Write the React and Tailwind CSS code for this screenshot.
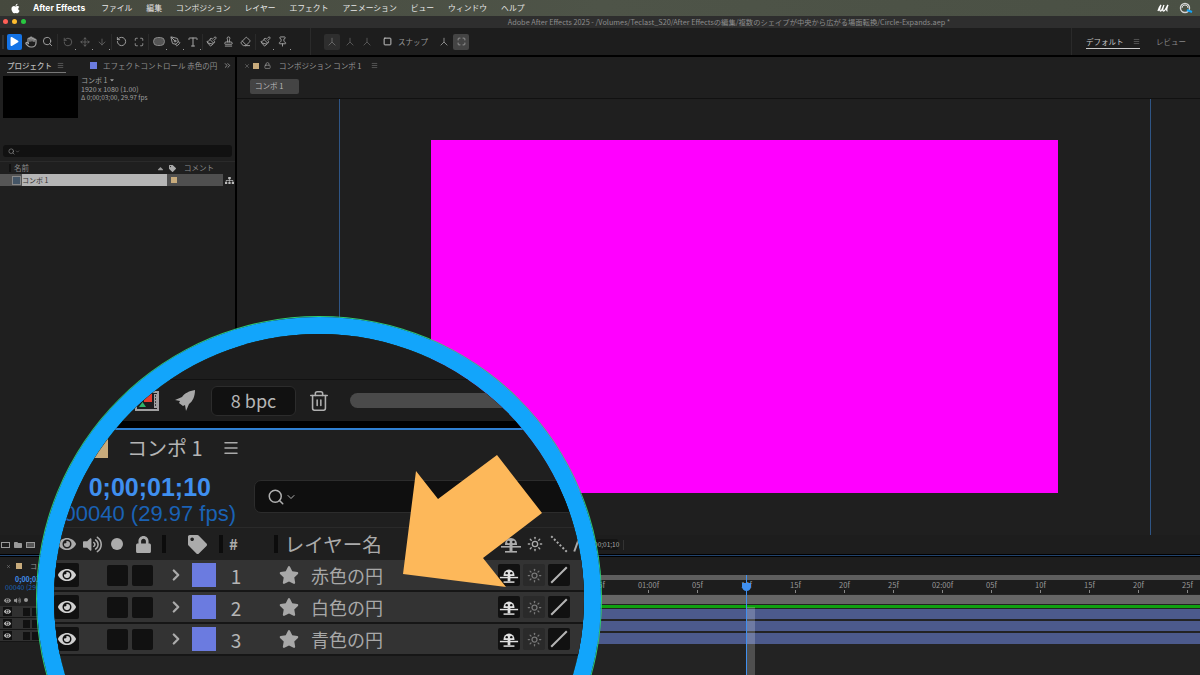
import React from "react";
import { FaApple, FaEye, FaLock, FaStar, FaTag, FaVolumeUp, FaSitemap, FaFolder, FaCaretDown, FaCaretUp, FaPlay } from "react-icons/fa";
import { Hand, Search, Move, ArrowDown, RotateCcw, PenTool, Type, Paintbrush, Stamp, Eraser, Pin, Menu, ChevronRight, ChevronDown, Trash2, Sun, Maximize, Square, ChevronsRight, Lock, X } from "lucide-react";

const menus = ["ファイル", "編集", "コンポジション", "レイヤー", "エフェクト", "アニメーション", "ビュー", "ウィンドウ", "ヘルプ"];
const ticks = ["15f", "01:00f", "05f", "10f", "15f", "20f", "25f", "02:00f", "05f", "10f", "15f", "20f", "25f"];
const layers = [
  { n: 1, name: "赤色の円" },
  { n: 2, name: "白色の円" },
  { n: 3, name: "青色の円" },
];

function Shy({ size = 22, className = "" }) {
  return (
    <svg width={size} height={size} viewBox="0 0 22 22" className={className} fill="currentColor">
      <path d="M5 11a6 6 0 0 1 12 0v1H5z" />
      <rect x="1" y="13" width="20" height="1.6" />
      <rect x="9.5" y="12" width="3" height="6" />
      <rect x="5" y="18" width="12" height="1.6" />
      <circle cx="8.5" cy="9" r="1.3" fill="#111" />
      <circle cx="13.5" cy="9" r="1.3" fill="#111" />
    </svg>
  );
}

function Tripod({ size = 12, className = "" }) {
  return (
    <svg width={size} height={size} viewBox="0 0 12 12" className={className} stroke="currentColor" fill="none" strokeWidth="1.2">
      <path d="M6 1v5L2 10M6 6l4 4" />
    </svg>
  );
}

function Rocket() {
  return (
    <svg width="24" height="24" viewBox="0 0 24 24" fill="#a8a8a8">
      <path d="M22 1c-6 1-10 3-13 7l-7 3 5 1-1 2 4 3 2-1 1 6 3-7c4-3 6-8 6-14z" />
    </svg>
  );
}

function Film() {
  return (
    <svg width="24" height="20" viewBox="0 0 24 20">
      <rect x="1" y="1" width="22" height="18" fill="#1d1d1d" stroke="#a0a0a0" strokeWidth="2" />
      <rect x="19" y="3" width="3" height="14" fill="#a0a0a0" />
      <path d="M20 5h1M20 8h1M20 11h1M20 14h1" stroke="#1d1d1d" strokeWidth="1.4" />
      <rect x="9" y="3" width="8" height="8" fill="#e53b2c" />
      <path d="M4 16l3.500-5 3.500 5z" fill="#2fb56a" />
    </svg>
  );
}

function Tool({ children, dot }) {
  return (
    <div className="relative flex h-[16px] w-[17px] items-center justify-center text-[#a6a6a6]">
      {children}
      {dot && <span className="absolute bottom-0 right-0 h-[1px] w-[1px] bg-[#999]" />}
    </div>
  );
}

function Toolbar() {
  return (
    <div className="flex h-[27px] items-center bg-[#1d1d1d] pl-[2px]">
      <div className="mr-[3px] h-[14px] w-[2px] bg-[#333]" />
      <div className="flex h-[16px] w-[15px] items-center justify-center rounded-[2px] bg-[#1473e6]">
        <FaPlay size={9} color="#fff" />
      </div>
      <div className="flex">
        <Tool><Hand size={12} strokeWidth={2.4} /></Tool>
        <Tool><Search size={11} /></Tool>
      </div>
      <div className="mx-[1px] h-[16px] w-[1px] bg-[#2a2a2a]" />
      <div className="flex text-[#666]">
        <Tool dot><RotateCcw size={10} className="text-[#666]" /></Tool>
        <Tool dot><Move size={10} className="text-[#666]" /></Tool>
        <Tool dot><ArrowDown size={10} className="text-[#666]" /></Tool>
      </div>
      <div className="mx-[1px] h-[16px] w-[1px] bg-[#2a2a2a]" />
      <Tool><RotateCcw size={11} /></Tool>
      <Tool><Maximize size={10} /></Tool>
      <div className="mx-[1px] h-[16px] w-[1px] bg-[#2a2a2a]" />
      <div className="flex">
        <Tool dot><span className="h-[9px] w-[12px] rounded-full border border-[#888] bg-[#555]" /></Tool>
        <Tool dot><PenTool size={11} /></Tool>
        <Tool dot><Type size={12} /></Tool>
      </div>
      <div className="ml-[1px] h-[16px] w-[1px] bg-[#2a2a2a]" />
      <div className="flex">
        <Tool><Paintbrush size={11} /></Tool>
        <Tool><Stamp size={11} /></Tool>
        <Tool><Eraser size={11} /></Tool>
      </div>
      <div className="mx-[1px] h-[16px] w-[1px] bg-[#2a2a2a]" />
      <Tool dot><Paintbrush size={11} /></Tool>
      <Tool dot><Pin size={11} /></Tool>
      <div className="ml-[19px] h-[27px] w-[1px] bg-[#2a2a2a]" />
      <div className="ml-[13px] flex h-[16px] w-[16px] items-center justify-center rounded-[2px] bg-[#2e2e2e] text-[#666]">
        <Tripod size={10} />
      </div>
      <div className="ml-[1px] flex w-[17px] justify-center text-[#555]"><Tripod size={10} /></div>
      <div className="flex w-[17px] justify-center text-[#555]"><Tripod size={10} /></div>
      <Square size={9} strokeWidth={2.5} className="ml-[8px] text-[#ccc]" />
      <span className="ml-[6px] w-[30px] whitespace-nowrap text-[7.5px] text-[#9a9a9a]">スナップ</span>
      <div className="ml-[11px] text-[#888]"><Tripod size={10} /></div>
      <div className="ml-[4px] flex h-[16px] w-[16px] items-center justify-center rounded-[2px] bg-[#444] text-[#aaa]">
        <Maximize size={9} />
      </div>
      <div className="ml-auto flex h-full items-center">
        <div className="h-full w-[1px] bg-[#2a2a2a]" />
        <div className="ml-[14px] flex h-full w-[54px] items-center">
          <div className="relative flex w-full items-center justify-between text-[7.5px] text-[#c4c4c4]">
            <span>デフォルト</span>
            <Menu size={7} className="text-[#777]" />
            <span className="absolute left-0 top-[12px] h-[1.5px] w-full bg-[#ccc]" />
          </div>
        </div>
        <span className="ml-[16px] mr-[14px] w-[30px] whitespace-nowrap text-[7.5px] text-[#888]">レビュー</span>
      </div>
    </div>
  );
}

function ProjectPanel() {
  return (
    <div className="flex w-[235px] flex-col bg-[#1f1f1f]">
      <div className="flex h-[17px] items-center pl-[7px] pr-[3px]">
        <div className="relative flex w-[59px] items-center justify-between pr-[2px] text-[7.5px] font-medium text-[#bbb]">
          <span>プロジェクト</span>
          <Menu size={7} className="text-[#777]" />
          <span className="absolute left-0 top-[12px] h-[1.5px] w-full bg-[#777]" />
        </div>
        <span className="ml-[24px] h-[7px] w-[7px] bg-[#6b7be0]" />
        <span className="ml-[6px] w-[116px] overflow-hidden whitespace-nowrap text-[7.5px] text-[#8f8f8f]">エフェクトコントロール 赤色の円</span>
        <ChevronsRight size={9} className="ml-auto text-[#aaa]" />
      </div>
      <div className="flex gap-[3px] pl-[3px] pt-[2px]">
        <div className="h-[42px] w-[75px] bg-black" />
        <div className="flex flex-col text-[7px] leading-[8.7px] text-[#a0a0a0]">
          <span className="flex items-center gap-[2px]">コンポ 1 <FaCaretDown size={6} /></span>
          <span>1920 x 1080 (1.00)</span>
          <span className="text-[6.5px]">Δ 0;00;03;00, 29.97 fps</span>
        </div>
      </div>
      <div className="mx-[3px] mt-[27px] flex h-[12px] items-center rounded-[3px] bg-[#111] pl-[5px] text-[#999]">
        <Search size={7} /><ChevronDown size={5} />
      </div>
      <div className="mt-[4px] flex h-[13px] items-center border-t border-[#2a2a2a] pl-[9px] text-[7.5px] text-[#8a8a8a]">
        <span className="h-[8px] w-[2px] bg-[#111]" />
        <span className="ml-[3px] w-[142px]">名前</span>
        <FaCaretUp size={9} className="text-[#999]" />
        <FaTag size={7} className="ml-[4px] text-[#aaa]" />
        <span className="ml-[8px]">コメント</span>
      </div>
      <div className="flex h-[12px] items-stretch">
        <div className="flex w-[22px] items-center justify-end bg-[#555] pr-[1px]">
          <span className="h-[9px] w-[9px] border border-[#888] bg-[#456]" />
        </div>
        <div className="flex w-[145px] items-center bg-[#b5b5b5] text-[7px] text-[#333]">コンポ 1</div>
        <div className="flex w-[56px] items-center bg-[#4f4f4f] pl-[4px]">
          <span className="h-[6px] w-[6px] bg-[#c8ab7c]" />
        </div>
        <div className="flex flex-1 items-center justify-center text-[#bbb]"><FaSitemap size={9} /></div>
      </div>
    </div>
  );
}

function CompPanel() {
  return (
    <div className="flex flex-1 flex-col bg-[#1f1f1f]">
      <div className="flex h-[17px] items-center pl-[7px] text-[7.5px] text-[#999]">
        <X size={6} className="text-[#888]" />
        <span className="ml-[3px] h-[6px] w-[6px] bg-[#c8ab7c]" />
        <Lock size={7} className="ml-[5px] text-[#aaa]" />
        <span className="ml-[8px] w-[90px] whitespace-nowrap">コンポジション コンポ 1</span>
        <Menu size={7} className="ml-[2px] text-[#777]" />
      </div>
      <div className="flex h-[25px] items-center border-b border-[#111] pl-[13px]">
        <div className="flex h-[15px] w-[49px] items-center rounded-[2px] bg-[#444] pl-[5px] text-[7.5px] text-[#bbb]">コンポ 1</div>
      </div>
      <div className="flex-1 pl-[102px] pr-[49px]">
        <div className="flex h-full items-center justify-center border-x border-[#2f5585]">
          <div className="mb-[2px] mr-[2px] h-[353px] w-[627px] bg-[#ff00ff]" />
        </div>
      </div>
    </div>
  );
}

function Timeline() {
  return (
    <div className="relative flex flex-col">
      <div className="flex h-[19px] items-center bg-[#1d1d1d] pl-[1px] text-[#999]">
        <div className="flex w-[40px] items-center gap-[4px]">
          <span className="h-[6px] w-[9px] border border-[#999]" />
          <FaFolder size={8} />
          <span className="h-[6px] w-[9px] border border-[#999] bg-[#555]" />
        </div>
        <div className="ml-[549px] flex h-[11px] w-[28px] items-center justify-center rounded-[2px] bg-[#141414] text-[6.5px] text-[#aaa]">0;00;01;10</div>
        <span className="ml-[5px] h-[10px] w-[1px] bg-[#333]" />
      </div>
      <div className="h-[1px] bg-black" />
      <div className="h-[1px] bg-[#22446e]" />
      <div className="h-[1px] bg-black" />
      <div className="flex h-[118px]">
        <div className="flex w-[575px] shrink-0 flex-col bg-[#1f1f1f]">
          <div className="flex h-[18px] items-center pl-[6px] text-[7px] text-[#999]">
            <X size={5} />
            <span className="ml-[5px] h-[6px] w-[6px] bg-[#c8ab7c]" />
            <span className="ml-[8px]">コンポ 1</span>
          </div>
          <div className="flex h-[19px] flex-col pl-[5px] text-[7px] leading-[8px]">
            <span className="pl-[10px] font-bold text-[#3f8fef]">0;00;01;10</span>
            <span className="text-[#1a62b5]">00040 (29.97 fps)</span>
          </div>
          <div className="flex h-[12px] items-center gap-[3px] pl-[4px] text-[#999]">
            <FaEye size={7} />
            <FaVolumeUp size={7} />
            <span className="h-[4px] w-[4px] rounded-full bg-[#999]" />
          </div>
          {layers.map((l) => (
            <div key={l.n} className="flex h-[12px] items-center border-b border-[#151515] bg-[#303030] pl-[3px] text-[#bbb]">
              <span className="flex h-[9px] w-[9px] items-center justify-center bg-[#111]"><FaEye size={7} /></span>
              <span className="ml-[11px] h-[8px] w-[7px] bg-[#111]" />
              <span className="ml-[2px] h-[8px] w-[7px] bg-[#111]" />
            </div>
          ))}
        </div>
        <div className="relative flex min-w-0 flex-1 flex-col overflow-hidden bg-[#232323]">
          <div className="h-[18px] bg-[#1d1d1d]" />
          <div className="h-[5px] bg-[#5e5e5e]" />
          <div className="flex h-[14px] bg-[#1d1d1d] text-[7.5px] leading-[10px] text-[#999]">
            {ticks.map((t, i) => (
              <div key={i} className="flex w-[49px] shrink-0 flex-col items-center">
                <span className="whitespace-nowrap">{t}</span>
                <span className="h-[3px] w-[1px] bg-[#888]" />
              </div>
            ))}
          </div>
          <div className="mt-[1px] h-[9px] bg-[#666]" />
          <div className="h-[1px] bg-[#222]" />
          <div className="h-[3px] bg-[#0fa010]" />
          <div className="mt-[1px] h-[10px] bg-[#4c5a8c]" />
          <div className="mt-[2px] h-[10px] bg-[#4c5a8c]" />
          <div className="mt-[2px] h-[11px] bg-[#4c5a8c]" />
          <div className="absolute bottom-0 left-[171px] top-[50px] w-[9px] bg-white/20" />
          <div className="absolute bottom-0 left-[171px] top-[18px] w-[1px] bg-[#3f8fef]" />
          <div className="absolute left-[167px] top-[26px] h-[8px] w-[9px] rounded-b-full bg-[#3f8fef]" />
        </div>
      </div>
    </div>
  );
}

function Magnifier() {
  return (
    <div className="absolute left-[37px] top-[317px] h-[564px] w-[564px] rounded-full border-[17px] border-[#12a5fb] shadow-[0_0_0_1px_#2ecc71,inset_0_0_0_1px_#2ecc71]">
      <div className="flex h-full w-full flex-col overflow-hidden rounded-full bg-[#232323] text-[#a8a8a8]">
        <div className="h-[46px] shrink-0 border-b border-[#111] bg-[#1d1d1d]" />
        <div className="flex h-[41px] shrink-0 items-center bg-[#1d1d1d] pl-[81px]">
          <Film />
          <div className="ml-[14px]"><Rocket /></div>
          <div className="ml-[14px] flex h-[30px] w-[85px] items-center justify-center rounded-[6px] border border-[#2c2c2c] bg-[#111] text-[18px] text-[#b5b5b5]">8 bpc</div>
          <Trash2 size={22} strokeWidth={1.7} className="ml-[12px] text-[#b0b0b0]" />
          <div className="ml-[20px] h-[15px] w-[230px] rounded-full bg-[#4a4a4a]" />
        </div>
        <div className="h-[7px] shrink-0 bg-black" />
        <div className="h-[2px] shrink-0 bg-[#2f7fd1]" />
        <div className="flex h-[36px] shrink-0 items-center bg-[#1f1f1f] pl-[36px]">
          <span className="h-[20px] w-[18px] bg-[#c8ab7c]" />
          <span className="ml-[19px] text-[20px] leading-none text-[#b5b5b5]">コンポ 1</span>
          <Menu size={18} className="ml-[19px] text-[#aaa]" />
        </div>
        <div className="flex h-[62px] shrink-0 items-start border-b border-[#2a2a2a] bg-[#1f1f1f]">
          <div className="flex w-[182px] shrink-0 flex-col items-end pt-[7px] font-['Liberation_Sans',sans-serif]">
            <span className="pr-[25px] text-[25px] font-bold leading-[28px] text-[#3f8fef]">0;00;01;10</span>
            <span className="whitespace-nowrap text-[22px] leading-[26px] text-[#1a62b5]">00040 (29.97 fps)</span>
          </div>
          <div className="ml-[18px] mt-[14px] flex h-[33px] flex-1 items-center rounded-l-[7px] border border-[#2c2c2c] bg-[#0f0f0f] pl-[12px] text-[#b0b0b0]">
            <Search size={18} />
            <ChevronDown size={12} />
          </div>
        </div>
        <div className="flex h-[32px] shrink-0 items-center bg-[#1f1f1f] pl-[4px] text-[#ababab]">
          <FaEye size={18} />
          <FaVolumeUp size={19} className="ml-[7px]" />
          <span className="ml-[9px] h-[12px] w-[12px] rounded-full bg-[#ababab]" />
          <FaLock size={17} className="ml-[12px]" />
          <span className="ml-[10px] h-[18px] w-[4px] bg-[#0c0c0c]" />
          <FaTag size={19} className="ml-[22px]" />
          <span className="ml-[12px] h-[18px] w-[4px] bg-[#0c0c0c]" />
          <span className="ml-[6px] text-[15px] font-bold">#</span>
          <span className="ml-[36px] h-[18px] w-[4px] bg-[#0c0c0c]" />
          <span className="ml-[7px] whitespace-nowrap text-[19.5px]">レイヤー名</span>
          <Shy size={22} className="ml-[118px]" />
          <Sun size={16} className="ml-[5px]" />
          <span className="ml-[5px] h-[2px] w-[22px] rotate-45 border-t-2 border-dotted border-[#ababab]" />
          <span className="ml-[6px] h-[16px] w-[2px] rotate-[20deg] bg-[#ababab]" />
        </div>
        <div className="shrink-0 bg-[#161616]">
          {layers.map((l) => (
            <div key={l.n} className="mb-[2px] flex h-[30px] items-center bg-[#333333]">
              <span className="flex h-[24px] w-[25px] items-center justify-center rounded-[2px] bg-[#111] text-[#d0d0d0]"><FaEye size={18} /></span>
              <span className="ml-[28px] h-[21px] w-[21px] rounded-[2px] bg-[#111]" />
              <span className="ml-[4px] h-[21px] w-[21px] rounded-[2px] bg-[#111]" />
              <ChevronRight size={18} strokeWidth={3} className="ml-[14px] text-[#aaa]" />
              <span className="ml-[7px] h-[24px] w-[24px] bg-[#6b7be0]" />
              <span className="ml-[14px] w-[12px] text-center text-[19px] leading-none text-[#b5b5b5]">{l.n}</span>
              <FaStar size={20} className="ml-[37px] text-[#a8a8a8]" />
              <span className="ml-[12px] whitespace-nowrap text-[18px] text-[#a8a8a8]">{l.name}</span>
              <span className="ml-[115px] flex h-[22px] w-[22px] items-center justify-center rounded-[2px] bg-[#111] text-[#e0e0e0]"><Shy size={20} /></span>
              <span className="ml-[3px] flex h-[22px] w-[22px] items-center justify-center rounded-[2px] bg-[#2a2a2a] text-[#777]"><Sun size={15} /></span>
              <span className="ml-[3px] flex h-[22px] w-[22px] items-center justify-center rounded-[2px] bg-[#111]">
                <span className="h-[2px] w-[24px] -rotate-45 bg-[#b5b5b5]" />
              </span>
            </div>
          ))}
        </div>
      </div>
    </div>
  );
}

export default function App() {
  return (
    <div className="relative h-[675px] w-[1200px] overflow-hidden bg-black font-['Noto_Sans_CJK_JP',sans-serif]">
      <div className="flex h-[16px] items-center bg-gradient-to-r from-[#46493e] via-[#4e5448] to-[#4a5044] pl-[10px] text-[7.8px] text-[#e8e8e8]">
        <FaApple size={11} color="#fff" />
        <span className="ml-[12px] font-['Inter',sans-serif] text-[8.5px] font-bold text-white">After Effects</span>
        <div className="ml-[16px] flex gap-[14px]">
          {menus.map((m) => (
            <span key={m} className="whitespace-nowrap">{m}</span>
          ))}
        </div>
        <div className="ml-auto mr-[7px] flex items-center gap-[10px] text-white">
          <svg width="12" height="10" viewBox="0 0 12 10" fill="none" stroke="#fff" strokeWidth="1.3">
            <path d="M1 8C2 5 3 3 4 2 3 4 2 8 3.500 8 5 8 6 4 7 2 6 4 5 8 6.500 8 8 8 9.500 4 11 2 10 4 9 8 10.500 8" />
          </svg>
          <svg width="14" height="12" viewBox="0 0 14 12" fill="none">
            <circle cx="6" cy="6" r="4.500" stroke="#d5d5d5" strokeWidth="1.4" />
            <path d="M3 6a3 3 0 0 1 6 0" stroke="#d5d5d5" strokeWidth="1" />
            <path d="M8 8l5 2" stroke="#12a5fb" strokeWidth="2" />
          </svg>
        </div>
      </div>
      <div className="relative flex h-[12px] items-center justify-center bg-[#2e2e2e] text-[7.3px] text-[#8c8c8c]">
        <div className="absolute left-[3px] top-[3px] flex gap-[4px]">
          <span className="h-[5px] w-[5px] rounded-full bg-[#ff5f57]" />
          <span className="h-[5px] w-[5px] rounded-full bg-[#febc2e]" />
          <span className="h-[5px] w-[5px] rounded-full bg-[#28c840]" />
        </div>
        <span className="pl-[258px] whitespace-nowrap">Adobe After Effects 2025 - /Volumes/Teclast_S20/After Effectsの編集/複数のシェイプが中央から広がる場面転換/Circle-Expands.aep *</span>
      </div>
      <Toolbar />
      <div className="flex h-[480px] gap-[2px] pt-[2px]">
        <ProjectPanel />
        <CompPanel />
      </div>
      <Timeline />
      <Magnifier />
      <svg className="absolute left-0 top-0" width="1200" height="675" viewBox="0 0 1200 675">
        <polygon points="497,455 542,513 483,558 506,587 403,574 416,471 438,499" fill="#fdb85a" />
      </svg>
    </div>
  );
}
